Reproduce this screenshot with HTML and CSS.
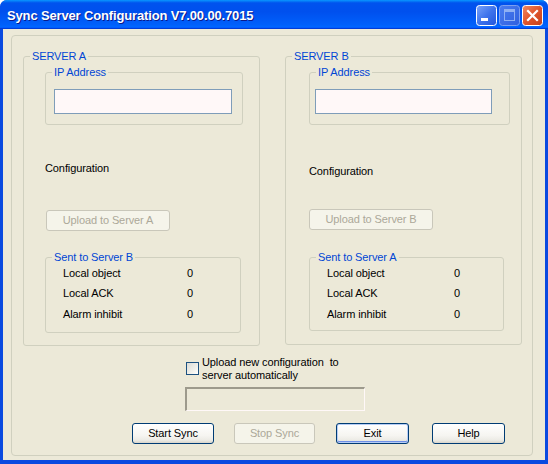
FILE: index.html
```html
<!DOCTYPE html>
<html>
<head>
<meta charset="utf-8">
<link rel="stylesheet" href="styles.css">
</head>
<body>
<div class="window">
  <div class="titlebar">
    <span class="title">Sync Server Configuration V7.00.00.7015</span>
    <div class="controls">
      <svg class="ctl" width="21" height="21" viewBox="0 0 21 21">
        <defs>
          <linearGradient id="gmin" x1="0" y1="0" x2="1" y2="1">
            <stop offset="0" stop-color="#7aa4fa"/>
            <stop offset="0.5" stop-color="#3f74ec"/>
            <stop offset="1" stop-color="#2356dc"/>
          </linearGradient>
        </defs>
        <rect x="0.5" y="0.5" width="20" height="20" rx="3" fill="url(#gmin)" stroke="#ffffff"/>
        <rect x="5" y="13" width="7" height="3" fill="#ffffff"/>
      </svg>
      <svg class="ctl" width="21" height="21" viewBox="0 0 21 21">
        <defs>
          <linearGradient id="gmax" x1="0" y1="0" x2="1" y2="1">
            <stop offset="0" stop-color="#4a7df0"/>
            <stop offset="1" stop-color="#2f5fdf"/>
          </linearGradient>
        </defs>
        <rect x="0.5" y="0.5" width="20" height="20" rx="3" fill="url(#gmax)" stroke="#7c9ff0"/>
        <rect x="5.5" y="5.5" width="10" height="10" fill="none" stroke="#8fb0f3"/>
        <rect x="5" y="4" width="11" height="3" fill="#8fb0f3"/>
      </svg>
      <svg class="ctl" width="21" height="21" viewBox="0 0 21 21">
        <defs>
          <linearGradient id="gcls" x1="0" y1="0" x2="1" y2="1">
            <stop offset="0" stop-color="#f08a64"/>
            <stop offset="0.5" stop-color="#e0552c"/>
            <stop offset="1" stop-color="#c2401c"/>
          </linearGradient>
        </defs>
        <rect x="0.5" y="0.5" width="20" height="20" rx="3" fill="url(#gcls)" stroke="#ffffff"/>
        <path d="M6 6 L15 15 M15 6 L6 15" stroke="#ffffff" stroke-width="2.2" stroke-linecap="square"/>
      </svg>
    </div>
  </div>
  <div class="client">
    <div class="panel">
      <div class="servers">
        <div class="group server">
          <div class="cap">SERVER A</div>
          <div class="group ipgroup">
            <div class="cap">IP Address</div>
            <input class="ip" type="text">
          </div>
          <div class="config">Configuration</div>
          <button class="btn upload" disabled>Upload to Server A</button>
          <div class="group sent">
            <div class="cap">Sent to Server B</div>
            <div class="rows">
              <span>Local object</span><span>0</span>
              <span>Local ACK</span><span>0</span>
              <span>Alarm inhibit</span><span>0</span>
            </div>
          </div>
        </div>
        <div class="group server server-b">
          <div class="cap">SERVER B</div>
          <div class="group ipgroup ipgroup-b">
            <div class="cap">IP Address</div>
            <input class="ip ip-b" type="text">
          </div>
          <div class="config config-b">Configuration</div>
          <button class="btn upload upload-b" disabled>Upload to Server B</button>
          <div class="group sent sent-b">
            <div class="cap">Sent to Server A</div>
            <div class="rows rows-b">
              <span>Local object</span><span>0</span>
              <span>Local ACK</span><span>0</span>
              <span>Alarm inhibit</span><span>0</span>
            </div>
          </div>
        </div>
      </div>
      <div class="options">
        <div class="check-row">
          <span class="checkbox"></span>
          <span class="check-label">Upload new configuration&nbsp; to<br>server automatically</span>
        </div>
        <div class="progress"></div>
      </div>
      <div class="actions">
        <button class="btn act start">Start Sync</button>
        <button class="btn act stop" disabled>Stop Sync</button>
        <button class="btn act exit default">Exit</button>
        <button class="btn act help">Help</button>
      </div>
    </div>
  </div>
</div>
</body>
</html>
```
FILE: styles.css
```css
* {
  box-sizing: border-box;
}

html, body {
  margin: 0;
  padding: 0;
  background: #ffffff;
}

body {
  width: 548px;
  height: 464px;
  font-family: "Liberation Sans", Arial, sans-serif;
  font-size: 11px;
  letter-spacing: -0.1px;
  color: #000000;
  overflow: hidden;
}

.window {
  width: 548px;
  height: 464px;
  display: flex;
  flex-direction: column;
  background: #0a4ae0;
  border-radius: 7px 7px 0 0;
  overflow: hidden;
}

.titlebar {
  height: 29px;
  flex: none;
  display: flex;
  align-items: center;
  justify-content: space-between;
  padding-left: 7px;
  background: linear-gradient(180deg, #0997ff 0%, #0053ee 10%, #0050ee 40%, #0060fb 85%, #0066ff 92%, #005bff 95%, #003dd7 97%, #003dd7 100%);
}

.title {
  color: #ffffff;
  font-weight: bold;
  font-size: 13px;
  letter-spacing: -0.15px;
  padding-top: 2px;
  text-shadow: 1px 1px 0 #0a1a8c;
}

.controls {
  display: flex;
  gap: 2px;
  margin-right: 5px;
  padding-top: 2px;
}

.ctl {
  display: block;
}

.client {
  flex: 1;
  display: flex;
  flex-direction: column;
  margin: 0 3px 4px 3px;
  background: #ece9d8;
}

.panel {
  flex: 1;
  margin: 6px 12px 4px 8px;
  border: 1px solid #d0d0bf;
  border-radius: 4px;
}

.group {
  border: 1px solid #d0d0bf;
  border-radius: 3px;
}

.cap {
  display: block;
  width: fit-content;
  height: 13px;
  line-height: 13px;
  margin: -7px 0 0 6px;
  padding: 0 2px;
  background: #ece9d8;
  color: #0046d5;
  white-space: nowrap;
}

.servers {
  display: flex;
  gap: 25px;
  margin: 20px 0 0 11px;
}

.server {
  flex: none;
  width: 237px;
  height: 290px;
}

.server-b {
  height: 289px;
}

.ipgroup {
  width: 198px;
  height: 53px;
  margin: 9px 0 0 21px;
}

.ipgroup-b {
  width: 201px;
  margin-left: 23px;
}

.ip {
  display: block;
  width: 178px;
  height: 25px;
  margin: 10px 0 0 8px;
  padding: 0;
  border: 1px solid #7f9db9;
  background: #fff8f8;
  outline: none;
}

.ip-b {
  width: 177px;
  margin-left: 5px;
}

.config {
  line-height: 13px;
  margin: 37px 0 0 21px;
}

.config-b {
  margin: 40px 0 0 23px;
}

.btn {
  font-family: inherit;
  font-size: 11px;
  letter-spacing: -0.1px;
  padding: 0;
  height: 21px;
  color: #000000;
  border: 1px solid #003c74;
  border-radius: 3px;
  background: linear-gradient(180deg, #ffffff 0%, #f6f5f1 60%, #ecebe5 85%, #d9d5ca 100%);
  line-height: 19px;
  text-align: center;
}

.btn:disabled {
  color: #aca899;
  border-color: #c9c7ba;
  background: #f5f4ea;
}

.upload {
  display: block;
  width: 124px;
  margin: 35px 0 0 22px;
}

.upload-b {
  margin: 31px 0 0 23px;
}

.sent {
  width: 196px;
  height: 76px;
  margin: 26px 0 0 21px;
}

.sent-b {
  width: 195px;
  height: 74px;
  margin: 27px 0 0 23px;
}

.rows {
  display: grid;
  grid-template-columns: 124px auto;
  grid-auto-rows: 20.5px;
  align-items: center;
  padding-left: 17px;
  margin-top: -1px;
  line-height: 13px;
}

.rows-b {
  grid-template-columns: 127px auto;
}

.options {
  margin: 10px 0 0 173px;
}

.check-row {
  display: flex;
  align-items: flex-start;
}

.checkbox {
  flex: none;
  width: 13px;
  height: 13px;
  margin: 6px 0 0 1px;
  border: 1px solid #1c5180;
  background: linear-gradient(135deg, #dcdcd7 0%, #f0f0ea 60%, #ffffff 100%);
}

.check-label {
  margin-left: 3px;
  line-height: 13px;
}

.progress {
  width: 180px;
  height: 24px;
  margin-top: 5px;
  border-style: solid;
  border-width: 2px 1px 1px 2px;
  border-color: #9d9a8c #fff8f8 #fff8f8 #9d9a8c;
  background: #ece9d8;
}

.actions {
  display: flex;
  margin: 12px 0 0 120px;
}

.act {
  flex: none;
}

.start {
  width: 82px;
}

.stop {
  width: 81px;
  margin-left: 20px;
}

.exit {
  width: 73px;
  margin-left: 21px;
}

.help {
  width: 73px;
  margin-left: 23px;
}

.default {
  box-shadow: inset 0 0 0 1px #b7cdf5, inset 0 -1px 0 1px #6f8fe6;
}
```
